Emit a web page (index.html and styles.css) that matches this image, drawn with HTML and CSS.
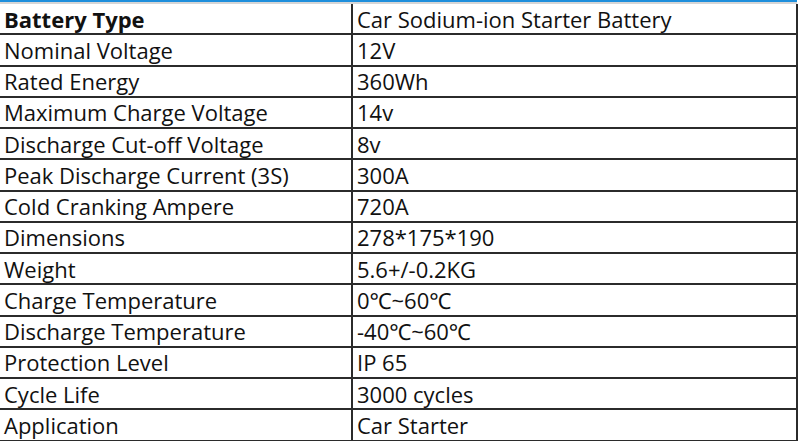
FILE: index.html
```html
<!DOCTYPE html>
<html>

<head>
    <meta charset="utf-8">
    <title>Battery Specification</title>
    <link rel="stylesheet" href="styles.css">
</head>

<body>
    <div class="topbar"></div>
    <table class="spec">
        <tr class="head"><td>Battery Type</td><td>Car Sodium-ion Starter Battery</td></tr>
        <tr><td>Nominal Voltage</td><td>12V</td></tr>
        <tr><td>Rated Energy</td><td>360Wh</td></tr>
        <tr><td>Maximum Charge Voltage</td><td>14v</td></tr>
        <tr><td>Discharge Cut-off Voltage</td><td>8v</td></tr>
        <tr><td>Peak Discharge Current (3S)</td><td>300A</td></tr>
        <tr><td>Cold Cranking Ampere</td><td>720A</td></tr>
        <tr><td>Dimensions</td><td>278*175*190</td></tr>
        <tr><td>Weight</td><td>5.6+/-0.2KG</td></tr>
        <tr><td>Charge Temperature</td><td>0℃~60℃</td></tr>
        <tr><td>Discharge Temperature</td><td>-40℃~60℃</td></tr>
        <tr><td>Protection Level</td><td>IP 65</td></tr>
        <tr><td>Cycle Life</td><td>3000 cycles</td></tr>
        <tr><td>Application</td><td>Car Starter</td></tr>
    </table>
</body>

</html>
```

FILE: styles.css
```css
* {
    padding: 0;
    margin: 0;
}

body {
    background: #fff;
    color: #111;
    font-family: "Open Sans", "Noto Sans", sans-serif;
    font-size: 22px;
    overflow: hidden;
}

.topbar {
    height: 2px;
    background: #1e8fdc;
    border-bottom: 2px solid #d6d6d6;
    width: 797px;
}

.spec {
    width: 798px;
    border-collapse: separate;
    border-spacing: 0;
    border-right: 2px solid #2b2b2b;
}

.spec td {
    height: 29.25px;
    padding: 0 4px;
    border-bottom: 2px solid #2b2b2b;
    line-height: 24px;
    vertical-align: middle;
    white-space: nowrap;
}

.spec td:first-child {
    width: 343px;
    border-right: 2px solid #2b2b2b;
}

.spec .head td:first-child {
    font-weight: bold;
}
```
